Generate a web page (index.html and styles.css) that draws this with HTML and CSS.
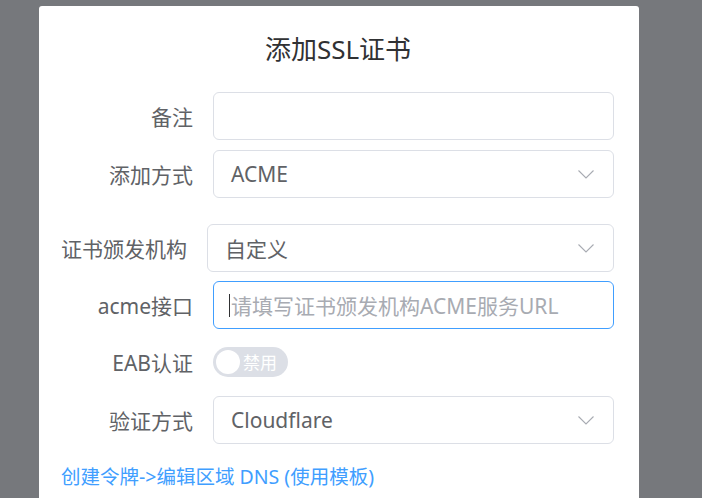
FILE: index.html
```html
<!DOCTYPE html>
<html lang="zh-CN">
<head>
<meta charset="utf-8">
<title>添加SSL证书</title>
<link rel="stylesheet" href="styles.css">
</head>
<body>
<div class="modal">
  <div class="title">添加SSL证书</div>
  <div class="form">
    <div class="row">
      <div class="label">备注</div>
      <div class="field"></div>
    </div>
    <div class="row row-gap">
      <div class="label">添加方式</div>
      <div class="field select"><span class="value">ACME</span>
        <svg class="chev" width="16" height="9" viewBox="0 0 16 9"><polyline points="0.5,0.5 8,8 15.5,0.5" fill="none" stroke="#a8abb2" stroke-width="1.1"/></svg>
      </div>
    </div>
    <div class="row row-tight">
      <div class="label label-auto">证书颁发机构</div>
      <div class="field select"><span class="value">自定义</span>
        <svg class="chev" width="16" height="9" viewBox="0 0 16 9"><polyline points="0.5,0.5 8,8 15.5,0.5" fill="none" stroke="#a8abb2" stroke-width="1.1"/></svg>
      </div>
    </div>
    <div class="row row-tight">
      <div class="label">acme接口</div>
      <div class="field focus"><span class="caret"></span><span class="placeholder">请填写证书颁发机构ACME服务URL</span></div>
    </div>
    <div class="row">
      <div class="label">EAB认证</div>
      <div class="switch"><span class="knob"></span><span class="switch-text">禁用</span></div>
    </div>
    <div class="row">
      <div class="label">验证方式</div>
      <div class="field select"><span class="value">Cloudflare</span>
        <svg class="chev" width="16" height="9" viewBox="0 0 16 9"><polyline points="0.5,0.5 8,8 15.5,0.5" fill="none" stroke="#a8abb2" stroke-width="1.1"/></svg>
      </div>
    </div>
    <a class="link" href="#">创建令牌-&gt;编辑区域 DNS (使用模板)</a>
  </div>
</div>
</body>
</html>
```
FILE: styles.css
```css
html, body {
  margin: 0;
  padding: 0;
}
body {
  width: 702px;
  height: 498px;
  overflow: hidden;
  background: #76787c;
  font-family: "Noto Sans", "Noto Sans CJK SC", sans-serif;
}
.modal {
  margin: 6px 0 0 39px;
  width: 600px;
  min-height: 560px;
  box-sizing: border-box;
  background: #ffffff;
  border-radius: 3px 3px 0 0;
  padding: 26px 25px 0 22px;
}
.title {
  text-align: center;
  font-size: 26px;
  line-height: 35px;
  color: #303133;
  height: 35px;
  padding-left: 1px;
}
.form {
  margin-top: 25px;
  display: flex;
  flex-direction: column;
}
.row {
  display: flex;
  align-items: center;
  height: 48px;
  margin-bottom: 10px;
}
.row-gap {
  margin-bottom: 26px;
}
.row-tight {
  margin-bottom: 9px;
}
.label {
  flex: 0 0 152px;
  box-sizing: border-box;
  padding-right: 20px;
  text-align: right;
  font-size: 21px;
  color: #606266;
  white-space: nowrap;
}
.label-auto {
  flex: 0 0 auto;
}
.field {
  flex: 1;
  height: 48px;
  box-sizing: border-box;
  border: 1px solid #dcdfe6;
  border-radius: 6px;
  display: flex;
  align-items: center;
  padding: 0 19px 0 17px;
  font-size: 21px;
  color: #606266;
}
.select .value {
  flex: 1;
}
.chev {
  display: block;
  margin-top: 1px;
}
.focus {
  border-color: #409eff;
  padding-left: 15px;
}
.caret {
  width: 1px;
  height: 23px;
  background: #303133;
  margin-right: 1px;
}
.placeholder {
  color: #a8abb2;
  white-space: nowrap;
}
.switch {
  width: 75px;
  height: 30px;
  border-radius: 15px;
  background: #dcdfe6;
  display: flex;
  align-items: center;
  box-sizing: border-box;
  padding-left: 3px;
}
.knob {
  width: 24px;
  height: 24px;
  border-radius: 50%;
  background: #ffffff;
}
.switch-text {
  margin-left: 3px;
  font-size: 17px;
  color: #ffffff;
  line-height: 1;
}
.link {
  margin-top: 10px;
  font-size: 19.5px;
  line-height: 26px;
  color: #409eff;
  text-decoration: none;
  align-self: flex-start;
}
```
